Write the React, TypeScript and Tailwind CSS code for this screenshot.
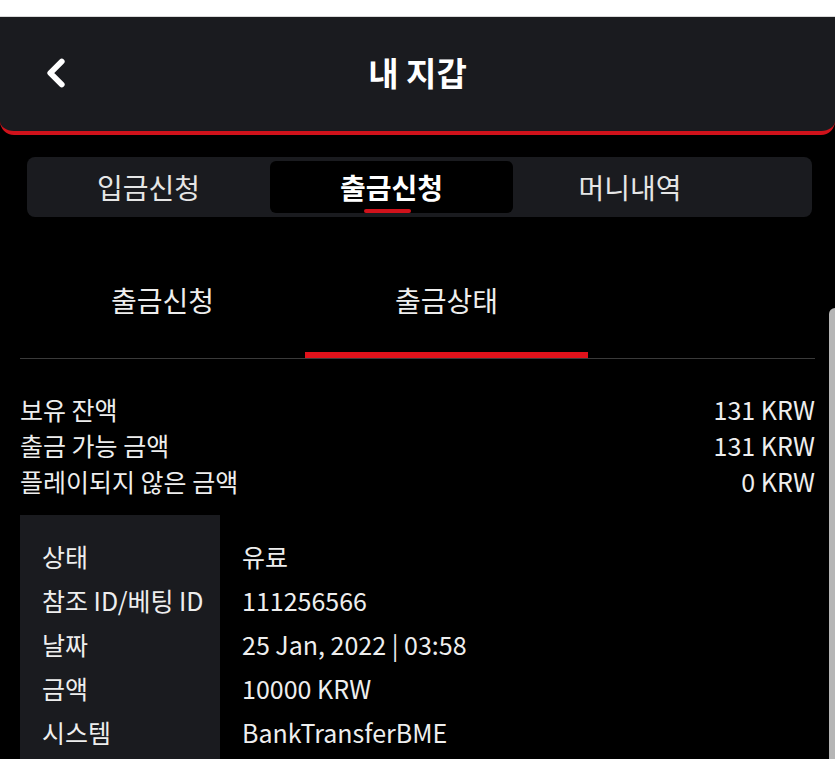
import { ChevronLeft } from "lucide-react";

const font = { fontFamily: '"Noto Sans CJK KR", "Noto Sans", sans-serif' };

const balances = [
  { label: "보유 잔액", value: "131 KRW" },
  { label: "출금 가능 금액", value: "131 KRW" },
  { label: "플레이되지 않은 금액", value: "0 KRW" },
];

const details = [
  { label: "상태", value: "유료" },
  { label: "참조 ID/베팅 ID", value: "111256566" },
  { label: "날짜", value: "25 Jan, 2022 | 03:58" },
  { label: "금액", value: "10000 KRW" },
  { label: "시스템", value: "BankTransferBME" },
];

export default function App() {
  return (
    <div className="relative h-[759px] w-[835px] overflow-hidden bg-black text-[#eeeeee]" style={font}>
      <div className="h-[17px] border-b border-[#d9d9d9] bg-white" />

      <header className="relative flex h-[118px] items-center justify-center rounded-b-[14px] border-b-[4px] border-[#d0121b] bg-[#1a1b1f]">
        <button className="absolute left-[33px] top-[33px] text-white">
          <ChevronLeft size={46} strokeWidth={3} />
        </button>
        <h1 className="mt-[-2px] text-[33px] font-bold text-white">내 지갑</h1>
      </header>

      <div className="pl-[27px] pr-[23px] pt-[22px]">
        <div className="flex h-[60px] items-center rounded-[8px] bg-[#1a1b1f]">
          <div className="flex w-[243px] items-center justify-center text-[28px] text-[#e6e6e6]">입금신청</div>
          <div className="relative flex h-[52px] w-[243px] items-center justify-center rounded-[6px] bg-black text-[28px] font-bold text-white">
            출금신청
            <span className="absolute bottom-[0px] left-[94px] h-[4px] w-[47px] rounded-full bg-[#d0121b]" />
          </div>
          <div className="flex w-[234px] items-center justify-center text-[28px] text-[#e6e6e6]">머니내역</div>
        </div>
      </div>

      <div className="px-[20px]">
        <div className="mt-[39px] flex border-b border-[#3a3a3a]">
          <div className="flex h-[102px] w-[285px] items-center justify-center pb-[14px] text-[28px]">출금신청</div>
          <div className="relative flex h-[102px] w-[283px] items-center justify-center pb-[14px] text-[28px]">
            출금상태
            <span className="absolute bottom-0 left-0 h-[6px] w-full bg-[#e0121b]" />
          </div>
        </div>

        <div className="mt-[33px] flex flex-col">
          {balances.map((b) => (
            <div key={b.label} className="flex h-[36px] items-center justify-between text-[25px]">
              <span>{b.label}</span>
              <span>{b.value}</span>
            </div>
          ))}
        </div>

        <div className="mt-[15px] flex">
          <div className="flex w-[200px] flex-col bg-[#1a1b1f] pt-[20px] pb-[20px] pl-[22px]">
            {details.map((d) => (
              <div key={d.label} className="flex h-[44px] items-center text-[25px]">{d.label}</div>
            ))}
          </div>
          <div className="flex flex-col pt-[20px] pl-[22px]">
            {details.map((d) => (
              <div key={d.label} className="flex h-[44px] items-center text-[25px]">{d.value}</div>
            ))}
          </div>
        </div>
      </div>

      <div className="absolute right-0 top-[308px] h-[460px] w-[6px] rounded-tl-[6px] bg-[#b5b5b5]" />
    </div>
  );
}
